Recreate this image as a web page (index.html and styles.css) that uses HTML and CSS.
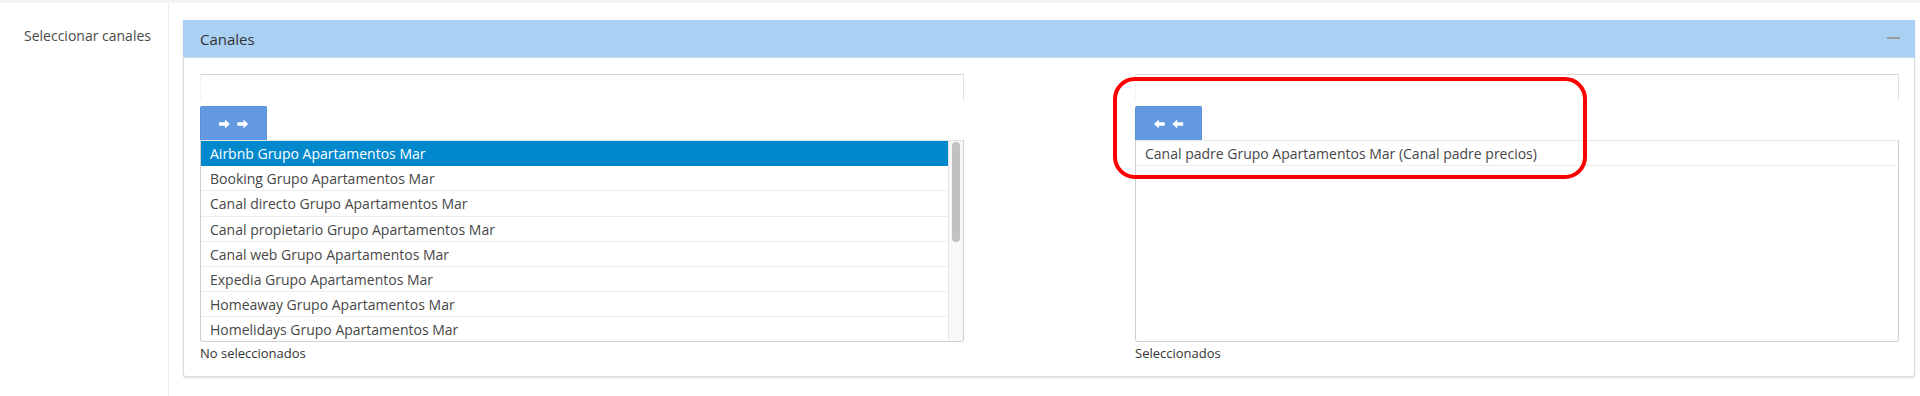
FILE: index.html
```html
<!DOCTYPE html>
<html lang="es">
<head>
<meta charset="utf-8">
<title>Seleccionar canales</title>
<link rel="stylesheet" href="styles.css">
</head>
<body>
<div class="page">
  <div class="form-row">
    <div class="label-col">Seleccionar canales</div>
    <div class="field-col">
      <div class="panel">
        <div class="panel-heading">
          <span class="panel-title">Canales</span>
          <span class="minimize"></span>
        </div>
        <div class="panel-body">
          <div class="dual">
            <div class="box">
              <div class="filter"></div>
              <button class="move-btn" type="button" aria-label="Mover todos">
                <svg width="30" height="10" viewBox="0 0 30 10"><path d="M0 3.2h6V0.4L10.8 5 6 9.6V6.8H0z" fill="#fff"/><path d="M18.4 3.2h6V0.4L29.2 5l-4.8 4.6V6.8h-6z" fill="#fff"/></svg>
              </button>
              <div class="list">
                <div class="options">
                  <div class="opt selected">Airbnb Grupo Apartamentos Mar</div>
                  <div class="opt">Booking Grupo Apartamentos Mar</div>
                  <div class="opt">Canal directo Grupo Apartamentos Mar</div>
                  <div class="opt">Canal propietario Grupo Apartamentos Mar</div>
                  <div class="opt">Canal web Grupo Apartamentos Mar</div>
                  <div class="opt">Expedia Grupo Apartamentos Mar</div>
                  <div class="opt">Homeaway Grupo Apartamentos Mar</div>
                  <div class="opt">Homelidays Grupo Apartamentos Mar</div>
                </div>
                <div class="scrollbar"><div class="thumb"></div></div>
              </div>
              <div class="box-label">No seleccionados</div>
            </div>
            <div class="box">
              <div class="filter"></div>
              <button class="move-btn" type="button" aria-label="Quitar todos">
                <svg width="30" height="10" viewBox="0 0 30 10"><path d="M10.8 3.2h-6V0.4L0 5l4.8 4.6V6.8h6z" fill="#fff"/><path d="M29.2 3.2h-6V0.4L18.4 5l4.8 4.6V6.8h6z" fill="#fff"/></svg>
              </button>
              <div class="list">
                <div class="options">
                  <div class="opt">Canal padre Grupo Apartamentos Mar (Canal padre precios)</div>
                </div>
              </div>
              <div class="box-label">Seleccionados</div>
            </div>
          </div>
        </div>
      </div>
    </div>
  </div>
  <div class="highlight"></div>
</div>
</body>
</html>
```
FILE: styles.css
```css
html, body {
  margin: 0;
  padding: 0;
  background: #fff;
}
body {
  font-family: "Open Sans", "Liberation Sans", sans-serif;
  color: #333;
  width: 1920px;
  height: 396px;
  overflow: hidden;
}
.page {
  position: relative;
  border-top: 3px solid #f4f4f4;
  height: 393px;
}
.form-row {
  display: flex;
  height: 393px;
}
.label-col {
  box-sizing: border-box;
  border-right: 1px solid #eeeeee;
  flex: 0 0 169px;
  padding: 23px 0 0 24px;
  font-size: 14px;
  line-height: 20px;
  color: #4a4a4a;
}
.field-col {
  flex: 1;
  padding: 17px 5px 0 14px;
}
.panel {
  border: 1px solid #dcdcdc;
  border-top: none;
  border-radius: 0 0 3px 3px;
  box-shadow: 0 1px 2px rgba(0, 0, 0, 0.12);
  background: #fff;
  height: 357px;
  box-sizing: border-box;
}
.panel-heading {
  height: 38px;
  background: #aad0f4;
  border-bottom: 1px solid #c8d8e8;
  box-sizing: border-box;
  margin: 0 -1px;
  display: flex;
  align-items: center;
  justify-content: space-between;
  padding: 0 15px 0 17px;
}
.panel-title {
  font-size: 15px;
  color: #333;
  line-height: 20px;
  padding-top: 1px;
}
.minimize {
  width: 13px;
  height: 2px;
  background: #9d9d9d;
  margin-top: -1px;
}
.panel-body {
  padding: 16px 15px 0 16px;
}
.dual {
  display: grid;
  grid-template-columns: 764px 764px;
  column-gap: 171px;
}
.box {
  display: flex;
  flex-direction: column;
  align-items: flex-start;
}
.filter {
  width: 764px;
  height: 26px;
  box-sizing: border-box;
  border-top: 1px solid #d6d6d6;
  border-right: 1px solid #e0e0e0;
  border-left: 1px solid #f2f2f2;
}
.move-btn {
  margin-top: 6px;
  width: 67px;
  height: 34px;
  background: #6399e0;
  border: 1px solid #5b91d8;
  border-bottom: none;
  border-radius: 2px 2px 0 0;
  padding: 0;
  display: flex;
  align-items: center;
  justify-content: center;
  cursor: pointer;
}
.move-btn svg {
  display: block;
  margin-top: 1px;
}
.list {
  width: 764px;
  height: 202px;
  box-sizing: border-box;
  border: 1px solid #cfcfcf;
  border-top-color: #e4e4e4;
  border-radius: 0 0 3px 3px;
  display: flex;
  overflow: hidden;
}
.options {
  flex: 1;
  overflow: hidden;
}
.opt {
  height: 25.2px;
  box-sizing: border-box;
  border-bottom: 1px solid #ececec;
  padding: 0 9px;
  font-size: 14px;
  line-height: 25px;
  color: #474747;
  white-space: nowrap;
}
.opt.selected {
  background: #0088cc;
  color: #fff;
  border-bottom-color: #0088cc;
}
.scrollbar {
  flex: 0 0 15px;
  background: #f8f8f8;
  border-left: 1px solid #e6e6e6;
  box-sizing: border-box;
  padding: 1px 0 0 3px;
}
.thumb {
  width: 8px;
  height: 100px;
  border-radius: 4px;
  background: #c1c1c1;
}
.box-label {
  font-size: 13px;
  line-height: 18px;
  color: #333;
  margin-top: 2px;
}
.highlight {
  position: absolute;
  left: 1113px;
  top: 74px;
  width: 474px;
  height: 102px;
  box-sizing: border-box;
  border: 4px solid #ff0000;
  border-radius: 22px;
  pointer-events: none;
}
```
